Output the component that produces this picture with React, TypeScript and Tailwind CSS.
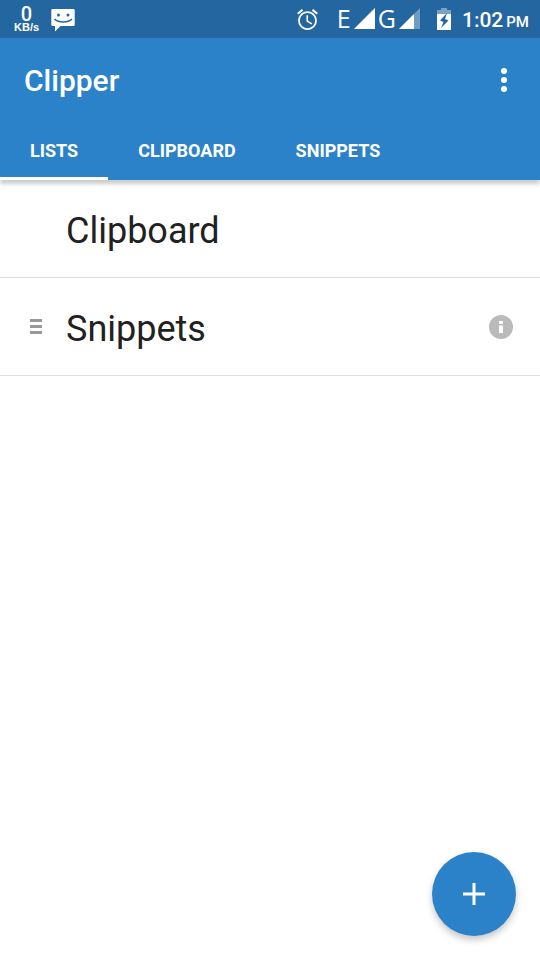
import { useState } from "react"

type Tab = "lists" | "clipboard" | "snippets"

const tabs: { id: Tab; label: string }[] = [
  { id: "lists", label: "LISTS" },
  { id: "clipboard", label: "CLIPBOARD" },
  { id: "snippets", label: "SNIPPETS" },
]

const lists = [
  { name: "Clipboard", editable: false },
  { name: "Snippets", editable: true },
]

function MessageIcon() {
  return (
    <svg width="24" height="24" viewBox="0 0 24 24" aria-hidden="true">
      <path fill="#fff" d="M1.500 1h21A1.200 1.200 0 0 1 23.700 2.200v14.600a1.200 1.200 0 0 1-1.200 1.200H9.500L4 23.500V18H1.500A1.200 1.200 0 0 1 .3 16.800V2.200A1.200 1.200 0 0 1 1.500 1z" />
      <circle cx="7.500" cy="7" r="1.500" fill="#2467a0" />
      <circle cx="17" cy="7" r="1.500" fill="#2467a0" />
      <path d="M3.500 11c4 4 13.500 4 17.500 0" fill="none" stroke="#2467a0" strokeWidth="1.500" />
    </svg>
  )
}

function AlarmIcon() {
  return (
    <svg width="25" height="25" viewBox="0 0 24 24" fill="#fff" aria-hidden="true">
      <path d="M22 5.720l-4.600-3.860-1.290 1.530 4.600 3.860L22 5.720zM7.880 3.390L6.600 1.860 2 5.710l1.290 1.530 4.590-3.850zM12.500 8H11v6l4.750 2.850.75-1.230-4-2.370V8zM12 4c-4.970 0-9 4.030-9 9s4.020 9 9 9c4.970 0 9-4.030 9-9s-4.030-9-9-9zm0 16.300c-4.030 0-7.300-3.270-7.300-7.300s3.270-7.300 7.300-7.300 7.300 3.270 7.300 7.300-3.270 7.300-7.300 7.300z" />
    </svg>
  )
}

function SignalIcon({ level }: { level: number }) {
  return (
    <svg width="21" height="21" viewBox="0 0 21 21" fill="#fff" aria-hidden="true">
      <path d="M0 21L21 0v21z" opacity="0.350" />
      <path d={`M0 21L${level} ${21 - level}V21z`} />
    </svg>
  )
}

function BatteryIcon() {
  return (
    <svg width="14" height="22" viewBox="0 0 14 22" fill="#fff" aria-hidden="true">
      <path d="M0 2h4V0h6v2h4v4H0z" opacity="0.400" />
      <path d="M0 6h14v16H0z" />
      <path d="M10 5L3 12.500l3.500 1.500L4 20l7.500-7.500L8 11z" fill="#2467a0" />
    </svg>
  )
}

function StatusBar() {
  return (
    <div className="flex h-[38px] items-center justify-between bg-[#2467a0] pr-[11px] pl-3.5 text-white">
      <div className="flex items-center gap-3">
        <div className="flex flex-col items-center">
          <span className="text-[20px] leading-4 font-medium">0</span>
          <span className="font-['Liberation_Sans',sans-serif] text-[11px] leading-[10px] font-bold">KB/s</span>
        </div>
        <div className="pt-0.5">
          <MessageIcon />
        </div>
      </div>
      <div className="flex items-center">
        <AlarmIcon />
        <div className="ml-[17px] flex items-center pb-0.5 font-['Open_Sans',sans-serif] text-[25px] leading-9">
          <span className="mr-[3px]">E</span>
          <SignalIcon level={21} />
          <span className="mx-[3px]">G</span>
          <SignalIcon level={15} />
        </div>
        <div className="mr-[11px] ml-[17px]">
          <BatteryIcon />
        </div>
        <div className="flex items-baseline gap-[3px] pt-[3px] font-medium">
          <span className="text-[21px] leading-6">1:02</span>
          <span className="text-[15px] leading-6">PM</span>
        </div>
      </div>
    </div>
  )
}

export default function App() {
  const [active, setActive] = useState<Tab>("lists")

  return (
    <div className="flex min-h-screen flex-col bg-white font-['Roboto',sans-serif]">
      <StatusBar />

      <header className="bg-[#2c82c9] text-white shadow-[0_4px_4px_rgba(0,0,0,0.2)]">
        <div className="flex h-[84px] items-center justify-between px-6">
          <h1 className="pt-0.5 text-[30px] leading-9 font-medium">Clipper</h1>
          <button type="button" aria-label="More options" className="flex h-12 w-6 items-center justify-center">
            <svg width="6" height="24" viewBox="0 0 6 24" fill="#fff" aria-hidden="true">
              <circle cx="3" cy="3" r="3" />
              <circle cx="3" cy="12" r="3" />
              <circle cx="3" cy="21" r="3" />
            </svg>
          </button>
        </div>
        <nav className="flex">
          {tabs.map((tab) => (
            <button
              key={tab.id}
              type="button"
              onClick={() => setActive(tab.id)}
              className={`h-[58px] border-b-3 px-[30px] pt-0.5 text-[18px] leading-6 font-bold ${
                active === tab.id ? "border-white" : "border-transparent"
              }`}
            >
              {tab.label}
            </button>
          ))}
        </nav>
      </header>

      <ul>
        {lists.map((list) => (
          <li key={list.name} className="flex h-[98px] items-center border-b border-[#dedede] pr-[27px] pl-[30px]">
            <div className="w-9">
              {list.editable && (
                <button type="button" aria-label="Reorder" className="flex w-3 flex-col gap-[3px]">
                  <span className="h-[3px] w-full bg-[#999999]" />
                  <span className="h-[3px] w-full bg-[#999999]" />
                  <span className="h-[3px] w-full bg-[#999999]" />
                </button>
              )}
            </div>
            <span className="flex-1 pt-1 text-4xl text-[#212121]">{list.name}</span>
            {list.editable && (
              <button type="button" aria-label="List info">
                <svg width="24" height="24" viewBox="0 0 24 24" aria-hidden="true">
                  <circle cx="12" cy="12" r="12" fill="#bababa" />
                  <path d="M10 6h4v3h-4zM10 10.500h4V18h-4z" fill="#fff" />
                </svg>
              </button>
            )}
          </li>
        ))}
      </ul>

      <button
        type="button"
        aria-label="Add list"
        className="fixed right-6 bottom-6 flex size-[84px] items-center justify-center rounded-full bg-[#2c82c9] shadow-[0_4px_7px_rgba(0,0,0,0.22)]"
      >
        <svg width="22" height="22" viewBox="0 0 22 22" fill="#fff" aria-hidden="true">
          <path d="M9.500 0h3v9.500H22v3h-9.500V22h-3v-9.500H0v-3h9.500z" />
        </svg>
      </button>
    </div>
  )
}
